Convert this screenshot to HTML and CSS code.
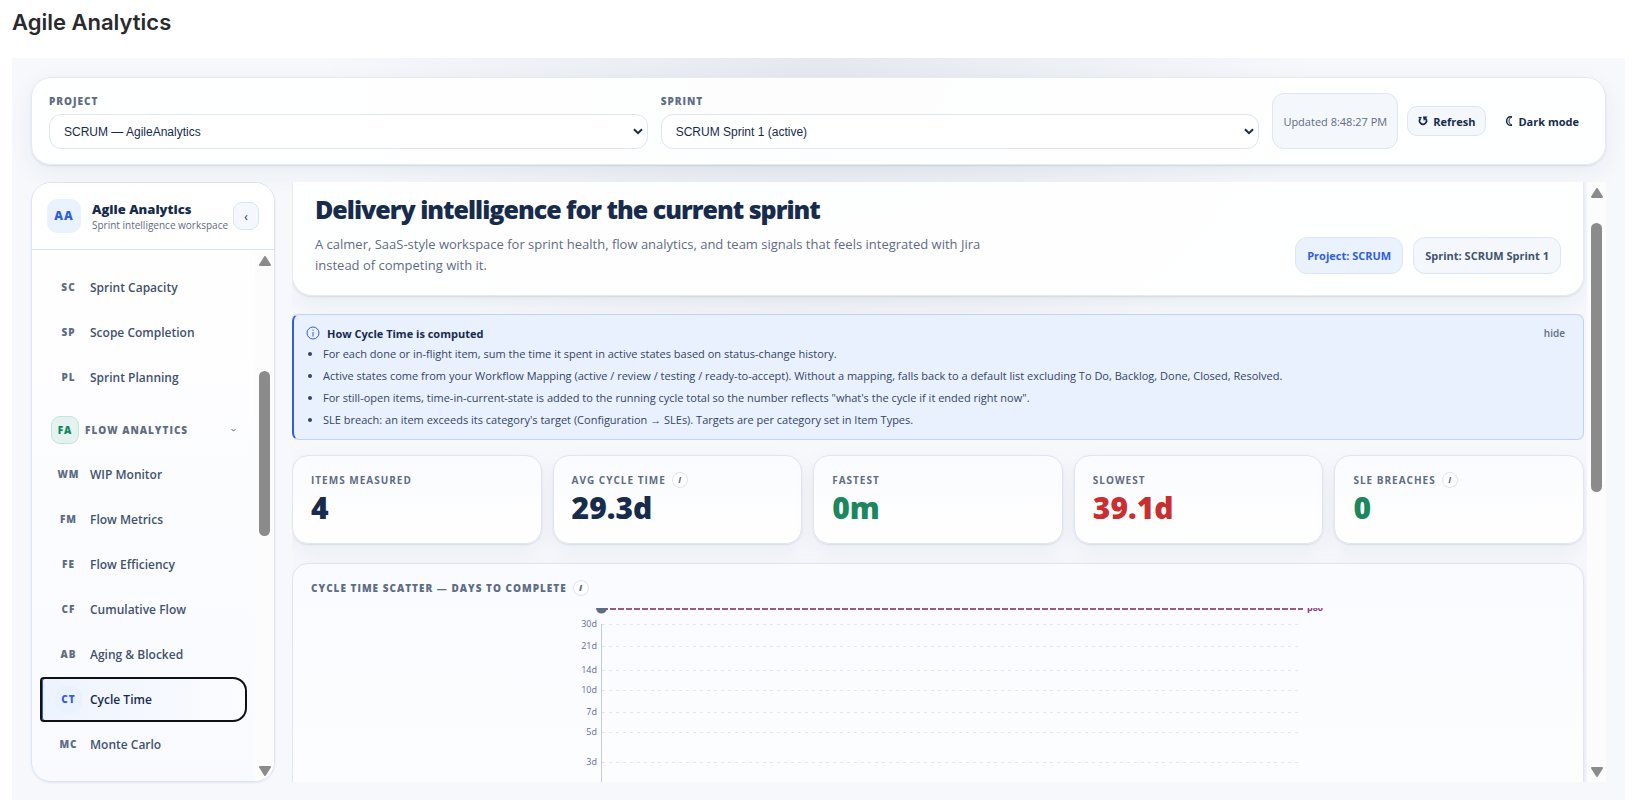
FILE: index.html
```
<!DOCTYPE html>
<html lang="en">
<head>
  <title>Agile Analytics</title>
  <meta charset="UTF-8">
  <meta name="viewport" content="width=device-width, initial-scale=1.0">
  <link rel="stylesheet" href="styles.css">
</head>
<body>
  <h1 class="page-title">Agile Analytics</h1>

  <div class="app">
    <header class="topbar">
      <div class="field">
        <label for="project">Project</label>
        <div class="select-wrap">
          <select id="project"><option>SCRUM — AgileAnalytics</option></select>
          <svg class="caret" viewBox="0 0 10 7" width="10" height="7"><path d="M1 1.2 5 5.2 9 1.2" fill="none" stroke="#172b4d" stroke-width="2"/></svg>
        </div>
      </div>
      <div class="field">
        <label for="sprint">Sprint</label>
        <div class="select-wrap">
          <select id="sprint"><option>SCRUM Sprint 1 (active)</option></select>
          <svg class="caret" viewBox="0 0 10 7" width="10" height="7"><path d="M1 1.2 5 5.2 9 1.2" fill="none" stroke="#172b4d" stroke-width="2"/></svg>
        </div>
      </div>
      <div class="actions">
        <span class="updated">Updated 8:48:27 PM</span>
        <button class="btn" type="button">
          <svg viewBox="0 0 10 10" width="10" height="10"><path d="M2.600 2.400A3.400 3.400 0 1 0 7.600 2.600" fill="none" stroke="#172b4d" stroke-width="1.700"/><path d="M5 .6h4.600L5.800 5z" fill="#172b4d"/><path d="M.6 1.600H3.600" stroke="#172b4d" stroke-width="1.400"/></svg>
          Refresh
        </button>
        <button class="btn ghost" type="button">
          <svg viewBox="0 0 8 10" width="8" height="10"><path d="M7 1C4 0 1.600 2 1.600 5S4 10 7 9" fill="none" stroke="#172b4d" stroke-width="1.500"/><path d="M7 1C4.500 2 4 3.500 4 5s.5 3 3 4" fill="none" stroke="#172b4d"/></svg>
          Dark mode
        </button>
      </div>
    </header>

    <div class="workspace">
      <aside class="sidebar">
        <div class="brand">
          <span class="logo">AA</span>
          <div class="brand-text">
            <strong>Agile Analytics</strong>
            <small>Sprint intelligence workspace</small>
          </div>
          <button class="collapse" type="button" aria-label="Collapse sidebar">‹</button>
        </div>
        <div class="nav-wrap">
          <nav class="nav">
            <a href="#"><span>SC</span>Sprint Capacity</a>
            <a href="#"><span>SP</span>Scope Completion</a>
            <a href="#"><span>PL</span>Sprint Planning</a>
            <button class="group" type="button">
              <span class="group-badge">FA</span>Flow Analytics
              <svg viewBox="0 0 5 3" width="5" height="3"><path d="M.5.5Q2.500 2.800 4.500.5" fill="none" stroke="#5e6c84"/></svg>
            </button>
            <a href="#"><span>WM</span>WIP Monitor</a>
            <a href="#"><span>FM</span>Flow Metrics</a>
            <a href="#"><span>FE</span>Flow Efficiency</a>
            <a href="#"><span>CF</span>Cumulative Flow</a>
            <a href="#"><span>AB</span>Aging &amp; Blocked</a>
            <a href="#" class="active"><span>CT</span>Cycle Time</a>
            <a href="#"><span>MC</span>Monte Carlo</a>
          </nav>
          <div class="scrollbar">
            <svg viewBox="0 0 12 10" width="12" height="10"><path d="M6 1 11 9H1z" fill="#8b8b8b" stroke="#8b8b8b" stroke-width="2" stroke-linejoin="round"/></svg>
            <div class="track nav-track"><div class="thumb"></div></div>
            <svg viewBox="0 0 12 10" width="12" height="10"><path d="M6 9 11 1H1z" fill="#8b8b8b" stroke="#8b8b8b" stroke-width="2" stroke-linejoin="round"/></svg>
          </div>
        </div>
      </aside>

      <main class="main">
        <div class="content">
          <section class="hero">
            <div class="hero-text">
              <h2>Delivery intelligence for the current sprint</h2>
              <p>A calmer, SaaS-style workspace for sprint health, flow analytics, and team signals that feels integrated with Jira instead of competing with it.</p>
            </div>
            <div class="pills">
              <span class="pill primary">Project: SCRUM</span>
              <span class="pill">Sprint: SCRUM Sprint 1</span>
            </div>
          </section>

          <section class="explain">
            <div class="explain-head">
              <svg viewBox="0 0 14 14" width="14" height="14"><circle cx="7" cy="7" r="6" fill="none" stroke="#2f5fe0"/><path d="M7 6v4.500M7 3.500v1.200" stroke="#2f5fe0"/></svg>
              <h3>How Cycle Time is computed</h3>
              <button class="hide" type="button">hide</button>
            </div>
            <ul>
              <li>For each done or in-flight item, sum the time it spent in active states based on status-change history.</li>
              <li>Active states come from your Workflow Mapping (active / review / testing / ready-to-accept). Without a mapping, falls back to a default list excluding To Do, Backlog, Done, Closed, Resolved.</li>
              <li>For still-open items, time-in-current-state is added to the running cycle total so the number reflects "what's the cycle if it ended right now".</li>
              <li>SLE breach: an item exceeds its category's target (Configuration → SLEs). Targets are per category set in Item Types.</li>
            </ul>
          </section>

          <section class="stats">
            <div class="card">
              <div class="card-label">Items measured</div>
              <div class="value">4</div>
            </div>
            <div class="card">
              <div class="card-label">Avg cycle time <span class="info">i</span></div>
              <div class="value">29.3d</div>
            </div>
            <div class="card">
              <div class="card-label">Fastest</div>
              <div class="value good">0m</div>
            </div>
            <div class="card">
              <div class="card-label">Slowest</div>
              <div class="value bad">39.1d</div>
            </div>
            <div class="card">
              <div class="card-label">SLE breaches <span class="info">i</span></div>
              <div class="value good">0</div>
            </div>
          </section>

          <section class="card chart-card">
            <div class="card-label">Cycle time scatter — days to complete <span class="info">i</span></div>
            <svg class="chart" viewBox="-8 0 780 240" width="780" height="240">
              <g class="grid">
                <path d="M46 16.500H744M46 38.500H744M46 62.500H744M46 82.500H744M46 104.500H744M46 124.500H744M46 154.500H744"/>
              </g>
              <path class="axis" d="M45.500 16V240"/>
              <path class="limit" d="M46 1H747"/>
              <circle cx="45.500" cy="0" r="5.500" fill="#5e6c84"/>
              <g class="ticks">
                <text x="41" y="19">30d</text>
                <text x="41" y="41">21d</text>
                <text x="41" y="65">14d</text>
                <text x="41" y="85">10d</text>
                <text x="41" y="107">7d</text>
                <text x="41" y="127">5d</text>
                <text x="41" y="157">3d</text>
              </g>
              <text class="limit-label" x="751" y="3">p80</text>
            </svg>
          </section>
        </div>
        <div class="scrollbar">
          <svg viewBox="0 0 12 10" width="12" height="10"><path d="M6 1 11 9H1z" fill="#8b8b8b" stroke="#8b8b8b" stroke-width="2" stroke-linejoin="round"/></svg>
          <div class="track main-track"><div class="thumb"></div></div>
          <svg viewBox="0 0 12 10" width="12" height="10"><path d="M6 9 11 1H1z" fill="#8b8b8b" stroke="#8b8b8b" stroke-width="2" stroke-linejoin="round"/></svg>
        </div>
      </main>
    </div>
  </div>
</body>
</html>
```
FILE: styles.css
```
* { box-sizing: border-box; }
body {
  margin: 0;
  height: 100vh;
  padding: 9px 10px 10px 12px;
  display: flex;
  flex-direction: column;
  background: #fff;
  color: #172b4d;
  font-family: "Open Sans", "Noto Sans", sans-serif;
  font-size: 12px;
}
button { font: inherit; color: inherit; cursor: pointer; }
h1, h2, h3, p, ul { margin: 0; }

.page-title { height: 49px; color: #292a2e; font: 600 22px/26px Inter, sans-serif; }

.app {
  flex: 1;
  min-height: 0;
  padding: 19px 19px 18px 19px;
  display: flex;
  flex-direction: column;
  gap: 17px;
  background: radial-gradient(ellipse 500px 360px at 50% 0, rgba(23, 43, 77, .08), transparent), #f6f8fc;
}

/* top bar */
.topbar {
  display: flex;
  gap: 13px;
  padding: 15px 16px 15px 17px;
  background: rgba(255, 255, 255, .9);
  border: 1px solid #e6e9f2;
  border-radius: 20px;
  box-shadow: 0 1px 2px rgba(23, 43, 77, .1), 0 8px 24px rgba(23, 43, 77, .06);
}
.field { flex: 1; display: flex; flex-direction: column; gap: 4px; }
.field label {
  color: #5e6c84;
  font-size: 10px;
  line-height: 17px;
  font-weight: 800;
  letter-spacing: 1px;
  text-transform: uppercase;
}
.select-wrap { display: grid; align-items: center; }
.select-wrap > * { grid-area: 1 / 1; }
.select-wrap select {
  height: 35px;
  padding: 0 14px;
  appearance: none;
  background: #fff;
  border: 1px solid #dfe5f4;
  border-radius: 12px;
  color: #172b4d;
  font: 12px "Liberation Sans", Arial, sans-serif;
}
.caret { justify-self: end; margin-right: 5px; pointer-events: none; }
.actions { display: flex; align-items: center; gap: 9px; }
.updated {
  align-self: stretch;
  display: flex;
  align-items: center;
  padding: 0 10px;
  background: #f4f7fc;
  border: 1px solid #dfe5f4;
  border-radius: 12px;
  color: #5e6c84;
  font-size: 11px;
}
.btn {
  height: 30px;
  padding: 0 10px;
  display: flex;
  align-items: center;
  gap: 5px;
  background: #f4f7fc;
  border: 1px solid #dfe5f4;
  border-radius: 10px;
  font-size: 11px;
  font-weight: 700;
}
.ghost { padding: 0 9px; background: none; border-color: transparent; }

.workspace { flex: 1; min-height: 0; display: flex; gap: 17px; }

/* sidebar */
.sidebar {
  width: 244px;
  flex: none;
  display: flex;
  flex-direction: column;
  overflow: hidden;
  background: linear-gradient(#fff, #f9faff);
  border: 1px solid #dae4f5;
  border-radius: 20px;
  box-shadow: 0 1px 2px rgba(23, 43, 77, .08);
}
.brand {
  height: 67px;
  flex: none;
  display: flex;
  align-items: center;
  padding: 0 15px;
  background: #fff;
  border-bottom: 1px solid #dae4f5;
}
.logo {
  width: 34px;
  height: 34px;
  margin-right: 11px;
  border-radius: 10px;
  background: #ebf2ff;
  color: #2f5fe0;
  font-weight: 800;
  line-height: 34px;
  text-align: center;
  letter-spacing: 1px;
}
.brand-text { flex: 1; white-space: nowrap; }
.brand-text strong { display: block; font-size: 13px; line-height: 18px; font-weight: 800; }
.brand-text small { display: block; color: #5e6c84; font-size: 10px; line-height: 15px; }
.collapse {
  width: 26px;
  height: 28px;
  padding: 0;
  background: #f4f7fc;
  border: 1px solid #dae4f5;
  border-radius: 9px;
}
.nav-wrap { flex: 1; min-height: 0; display: flex; }
.nav { flex: 1; min-width: 0; overflow: hidden; padding: 15px 8px 0; }
.nav a {
  height: 45px;
  display: flex;
  align-items: center;
  padding-left: 15px;
  color: #42526e;
  font-weight: 600;
  text-decoration: none;
}
.nav a span {
  width: 27px;
  height: 27px;
  margin-right: 8px;
  border-radius: 9px;
  color: #5e6c84;
  font-size: 10px;
  font-weight: 800;
  line-height: 27px;
  text-align: center;
  letter-spacing: 1px;
}
.nav .active {
  padding-left: 13px;
  background: linear-gradient(90deg, #edf3ff, #fbfcff);
  border: 2px solid #111;
  border-radius: 4px 14px 14px 4px;
  box-shadow: inset 1px 0 #2f5fe0;
  color: #172b4d;
}
.nav .active span { background: #ebf2ff; color: #2f5fe0; }
.group {
  width: 100%;
  height: 28px;
  margin: 16px 0 8px;
  padding: 0 11px;
  display: flex;
  align-items: center;
  border: 0;
  background: none;
  color: #5e6c84;
  font-size: 10px;
  font-weight: 800;
  letter-spacing: 1px;
  text-transform: uppercase;
}
.group svg { margin-left: auto; }
.group-badge {
  width: 28px;
  height: 28px;
  margin-right: 6px;
  border: 1px solid #c3e5db;
  border-radius: 9px;
  background: #e5f3f0;
  color: #12875d;
  line-height: 26px;
}

/* scrollbars */
.scrollbar {
  width: 19px;
  flex: none;
  display: flex;
  flex-direction: column;
  align-items: center;
  gap: 3px;
  padding: 6px 0 5px;
  background: #fcfcfd;
}
.track { flex: 1; display: flex; flex-direction: column; }
.track::after { content: ""; }
.thumb { width: 11px; border-radius: 6px; background: #8b8b8b; }
.nav-track::before { content: ""; flex: 102; }
.nav-track .thumb { flex: 166; }
.nav-track::after { flex: 227; }
.main-track::before { content: ""; flex: 22; }
.main-track .thumb { flex: 269; }
.main-track::after { flex: 272; }

/* main column */
.main { flex: 1; min-width: 0; display: flex; gap: 3px; overflow: hidden; }
.content { flex: 1; min-width: 0; }
.hero {
  display: flex;
  justify-content: space-between;
  align-items: flex-end;
  padding: 10px 22px 19px;
  background: rgba(255, 255, 255, .9);
  border: 1px solid #e6e9f2;
  border-top: 0;
  border-radius: 0 0 20px 20px;
  box-shadow: 0 1px 2px rgba(23, 43, 77, .1), 0 8px 24px rgba(23, 43, 77, .06);
}
.hero-text { max-width: 680px; }
.hero h2 { font-size: 25px; line-height: 34px; font-weight: 800; letter-spacing: -1px; }
.hero p { margin-top: 8px; color: #5e6c84; font-size: 13px; line-height: 21px; }
.pills { display: flex; gap: 10px; padding-bottom: 2px; }
.pill {
  padding: 0 11px;
  background: #f4f7fc;
  border: 1px solid #dfe5f4;
  border-radius: 12px;
  color: #42526e;
  font-size: 11px;
  font-weight: 700;
  line-height: 35px;
}
.primary { background: #ebf2ff; color: #2f5fe0; }

.explain {
  margin-top: 18px;
  padding: 8px 18px 8px 12px;
  background: #e9f1ff;
  border: 1px solid #c1d3f4;
  border-left: 2px solid #2f5fe0;
  border-radius: 7px;
}
.explain-head { display: flex; align-items: center; gap: 7px; height: 20px; }
.explain h3 { font-size: 11px; font-weight: 700; }
.hide { margin-left: auto; padding: 0; border: 0; background: none; color: #5e6c84; font-size: 10px; font-weight: 600; }
.explain ul { padding-left: 17px; color: #344563; font-size: 11px; line-height: 22px; }

.stats { display: grid; grid-template-columns: repeat(5, 1fr); gap: 11px; margin: 15px 0 19px; }
.card {
  padding: 16px 18px;
  background: linear-gradient(#fafbff, #fff);
  border: 1px solid #e0e5f2;
  border-radius: 16px;
  box-shadow: 0 1px 2px rgba(23, 43, 77, .1), 0 8px 24px rgba(23, 43, 77, .05);
}
.stats .card { height: 89px; }
.card-label {
  display: flex;
  align-items: center;
  gap: 6px;
  color: #5e6c84;
  font-size: 10px;
  line-height: 16px;
  font-weight: 700;
  letter-spacing: 1px;
  text-transform: uppercase;
}
.info {
  width: 16px;
  height: 16px;
  border: 1px solid #dfe5f4;
  border-radius: 50%;
  background: #fff;
  font-size: 9px;
  font-style: italic;
  line-height: 14px;
  text-align: center;
  letter-spacing: 0;
}
.value { font-size: 30px; line-height: 40px; font-weight: 800; }
.good { color: #1a875d; }
.bad { color: #c92f2f; }

.chart-card { height: 400px; }
.chart-card .card-label { font-weight: 800; }
.chart { display: block; margin: 12px auto 0; overflow: hidden; }
.grid { fill: none; stroke: #e3e6f2; stroke-dasharray: 3 4; }
.axis { stroke: #c5cad8; }
.limit { stroke: #9a5a85; stroke-width: 2; stroke-dasharray: 6 2; }
.ticks { fill: #5e6c9a; font-size: 9px; text-anchor: end; }
.limit-label { fill: #8b3a75; font-size: 9px; font-weight: 700; }
```
